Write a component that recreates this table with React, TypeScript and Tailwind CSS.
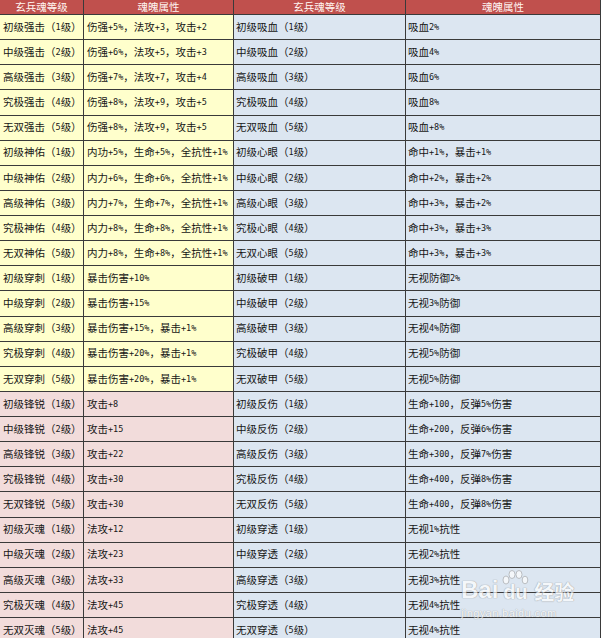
import React from "react";

type Row = [string, string, string, string];

const rows: Row[] = [
  ["初级强击（1级）", "伤强+5%，法攻+3，攻击+2", "初级吸血（1级）", "吸血2%"],
  ["中级强击（2级）", "伤强+6%，法攻+5，攻击+3", "中级吸血（2级）", "吸血4%"],
  ["高级强击（3级）", "伤强+7%，法攻+7，攻击+4", "高级吸血（3级）", "吸血6%"],
  ["究极强击（4级）", "伤强+8%，法攻+9，攻击+5", "究极吸血（4级）", "吸血8%"],
  ["无双强击（5级）", "伤强+8%，法攻+9，攻击+5", "无双吸血（5级）", "吸血+8%"],
  ["初级神佑（1级）", "内功+5%，生命+5%，全抗性+1%", "初级心眼（1级）", "命中+1%，暴击+1%"],
  ["中级神佑（2级）", "内力+6%，生命+6%，全抗性+1%", "中级心眼（2级）", "命中+2%，暴击+2%"],
  ["高级神佑（3级）", "内力+7%，生命+7%，全抗性+1%", "高级心眼（3级）", "命中+3%，暴击+2%"],
  ["究极神佑（4级）", "内力+8%，生命+8%，全抗性+1%", "究极心眼（4级）", "命中+3%，暴击+3%"],
  ["无双神佑（5级）", "内力+8%，生命+8%，全抗性+1%", "无双心眼（5级）", "命中+3%，暴击+3%"],
  ["初级穿刺（1级）", "暴击伤害+10%", "初级破甲（1级）", "无视防御2%"],
  ["中级穿刺（2级）", "暴击伤害+15%", "中级破甲（2级）", "无视3%防御"],
  ["高级穿刺（3级）", "暴击伤害+15%，暴击+1%", "高级破甲（3级）", "无视4%防御"],
  ["究极穿刺（4级）", "暴击伤害+20%，暴击+1%", "究极破甲（4级）", "无视5%防御"],
  ["无双穿刺（5级）", "暴击伤害+20%，暴击+1%", "无双破甲（5级）", "无视5%防御"],
  ["初级锋锐（1级）", "攻击+8", "初级反伤（1级）", "生命+100，反弹5%伤害"],
  ["中级锋锐（2级）", "攻击+15", "中级反伤（2级）", "生命+200，反弹6%伤害"],
  ["高级锋锐（3级）", "攻击+22", "高级反伤（3级）", "生命+300，反弹7%伤害"],
  ["究极锋锐（4级）", "攻击+30", "究极反伤（4级）", "生命+400，反弹8%伤害"],
  ["无双锋锐（5级）", "攻击+30", "无双反伤（5级）", "生命+400，反弹8%伤害"],
  ["初级灭魂（1级）", "法攻+12", "初级穿透（1级）", "无视1%抗性"],
  ["中级灭魂（2级）", "法攻+23", "中级穿透（2级）", "无视2%抗性"],
  ["高级灭魂（3级）", "法攻+33", "高级穿透（3级）", "无视3%抗性"],
  ["究极灭魂（4级）", "法攻+45", "究极穿透（4级）", "无视4%抗性"],
  ["无双灭魂（5级）", "法攻+45", "无双穿透（5级）", "无视4%抗性"],
];

function T({ s }: { s: string }) {
  const parts = s.split(/([\x21-\x7e]+)/).filter((p) => p.length > 0);
  return (
    <>
      {parts.map((p, i) =>
        /^[\x21-\x7e]+$/.test(p) ? (
          <span key={i} className="[font-family:'DejaVu_Sans_Mono',monospace] text-[8.5px]">
            {p}
          </span>
        ) : (
          <span key={i}>{p}</span>
        )
      )}
    </>
  );
}

export default function App() {
  return (
    <div className="relative w-[601px] h-[638px] overflow-hidden bg-white text-[#161616] [font-family:'Noto_Sans_CJK_SC','Liberation_Sans',sans-serif] text-[10.5px] leading-none">
      <div className="grid grid-cols-[84px_150px_172px_195px]">
        {["玄兵魂等级", "魂魄属性", "玄兵魂等级", "魂魄属性"].map((h, i) => (
          <div
            key={i}
            className="h-[15px] flex items-center justify-center bg-[#c0504d] text-[#fff4f0] border-b border-r border-[#3a3a3a]"
          >
            {h}
          </div>
        ))}
        {rows.map((r, ri) => {
          const left = ri < 15 ? "bg-[#ffffcc]" : "bg-[#f2dcdb]";
          return (
            <React.Fragment key={ri}>
              <div className={`h-[25.125px] flex items-center pl-[3px] whitespace-nowrap overflow-hidden border-b border-r border-[#3a3a3a] ${left}`}>
                <T s={r[0]} />
              </div>
              <div className={`h-[25.125px] flex items-center pl-[3px] whitespace-nowrap overflow-hidden border-b border-r border-[#3a3a3a] ${left}`}>
                <T s={r[1]} />
              </div>
              <div className="h-[25.125px] flex items-center pl-[2px] whitespace-nowrap overflow-hidden border-b border-r border-[#3a3a3a] bg-[#dce6f1]">
                <T s={r[2]} />
              </div>
              <div className="h-[25.125px] flex items-center pl-[2px] whitespace-nowrap overflow-hidden border-b border-r border-[#3a3a3a] bg-[#dce6f1]">
                <T s={r[3]} />
              </div>
            </React.Fragment>
          );
        })}
      </div>

      {/* Baidu watermark */}
      <div className="absolute left-[461px] top-[570px] w-[130px] h-[60px] pointer-events-none opacity-70 whitespace-nowrap">
        <div className="flex items-end whitespace-nowrap [text-shadow:0_0_1px_#8a8a8a,0_0_1px_#8a8a8a]">
          <span className="[font-family:'Liberation_Sans',sans-serif] font-bold text-[24px] leading-none text-white">Bai</span>
          <span className="relative w-[30px] h-[32px] flex items-end justify-center ml-[2px]">
            <svg className="absolute left-0 top-0" width="30" height="32" viewBox="0 0 30 32">
              <g fill="white" stroke="#9a9a9a" strokeWidth="0.8">
                <ellipse cx="6" cy="10" rx="3" ry="4" />
                <ellipse cx="12" cy="4.5" rx="3" ry="4" />
                <ellipse cx="19" cy="4.5" rx="3" ry="4" />
                <ellipse cx="25" cy="10" rx="2.8" ry="3.8" />
              </g>
            </svg>
            <span className="[font-family:'Liberation_Sans',sans-serif] font-bold text-[20px] leading-none text-white">du</span>
          </span>
          <span className="text-[20px] leading-none text-white ml-[4px] font-bold whitespace-nowrap">经验</span>
        </div>
        <div className="mt-[6px] [font-family:'Liberation_Sans',sans-serif] text-[11px] leading-none text-white tracking-[0.4px] [text-shadow:0_0_1px_#9a9a9a,0_0_1px_#9a9a9a]">
          jingyan.baidu.com
        </div>
      </div>
    </div>
  );
}
